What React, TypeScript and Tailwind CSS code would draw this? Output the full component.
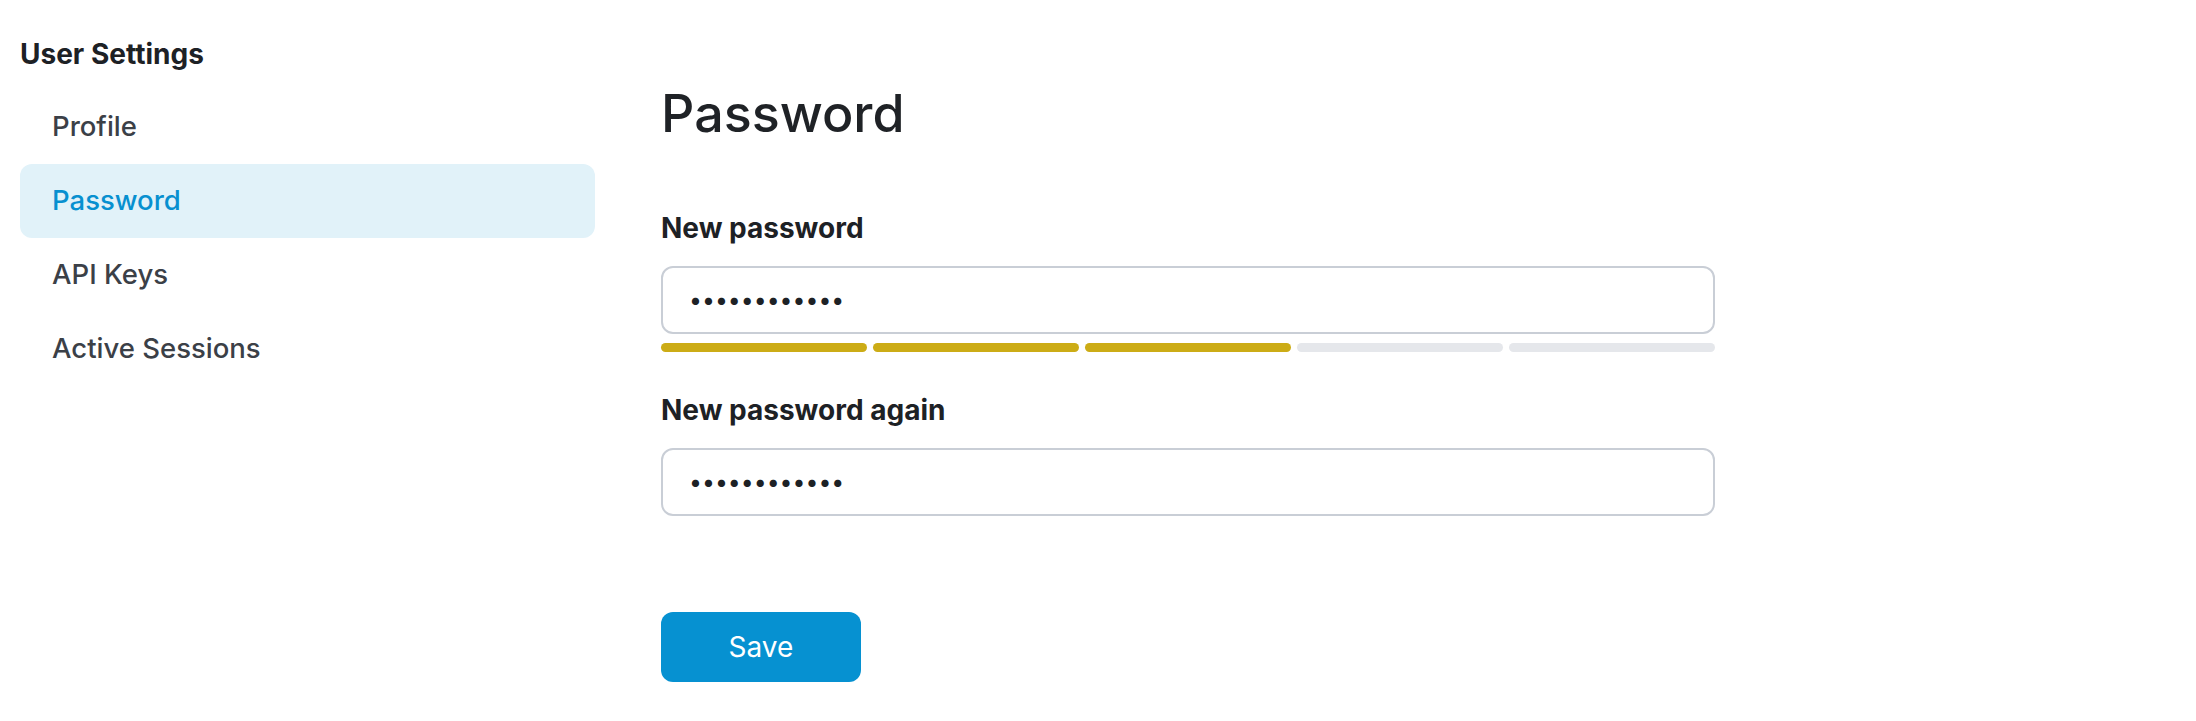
import { useState } from "react";

const navItems = ["Profile", "Password", "API Keys", "Active Sessions"];

function StrengthMeter({ score }: { score: number }) {
  return (
    <div className="mt-[9px] grid grid-cols-5 gap-[6px]">
      {[0, 1, 2, 3, 4].map((i) => (
        <div
          key={i}
          className={
            i < score
              ? "h-[9px] rounded-full bg-[#ccac16]"
              : "h-[9px] rounded-full bg-[#e5e7eb]"
          }
        />
      ))}
    </div>
  );
}

function PasswordField({ label, value, onChange }: { label: string; value: string; onChange: (v: string) => void }) {
  return (
    <div>
      <label className="block text-[28px] leading-[36px] font-bold text-[#1d2125]">{label}</label>
      <input
        type="password"
        value={value}
        onChange={(e) => onChange(e.target.value)}
        className="mt-5 block h-[68px] w-full rounded-[12px] border-2 border-[#c9ced6] bg-white px-[26px] text-[23px] text-[#1d2125] outline-none"
      />
    </div>
  );
}

export default function App() {
  const [active, setActive] = useState("Password");
  const [pw, setPw] = useState("correcthorse");
  const [pw2, setPw2] = useState("correcthorse");

  return (
    <div className="flex min-h-[721px] bg-white font-['Inter',_'Liberation_Sans',_sans-serif]">
      {/* sidebar */}
      <aside className="w-[595px] shrink-0 pl-5 pt-9">
        <h2 className="text-[28px] leading-[36px] font-bold text-[#1d2125]">User Settings</h2>
        <nav className="mt-[18px] flex flex-col">
          {navItems.map((item) => (
            <button
              key={item}
              onClick={() => setActive(item)}
              className={
                item === active
                  ? "flex h-[74px] items-center rounded-[12px] bg-[#e1f2f9] pl-[32px] text-left text-[27.5px] font-medium text-[#0790d0]"
                  : "flex h-[74px] items-center rounded-[12px] pl-[32px] text-left text-[27.5px] font-medium text-[#3b4047]"
              }
            >
              {item}
            </button>
          ))}
        </nav>
      </aside>

      {/* main */}
      <main className="ml-[66px] w-[1054px] pt-[82px]">
        <h1 className="text-[52px] leading-[64px] font-medium text-[#1f2226]">Password</h1>

        <div className="mt-16">
          <PasswordField label="New password" value={pw} onChange={setPw} />
          <StrengthMeter score={3} />
        </div>

        <div className="mt-10">
          <PasswordField label="New password again" value={pw2} onChange={setPw2} />
        </div>

        <button className="mt-[96px] h-[70px] w-[200px] rounded-[12px] bg-[#0691d1] text-[28px] text-white">
          Save
        </button>
      </main>
    </div>
  );
}
